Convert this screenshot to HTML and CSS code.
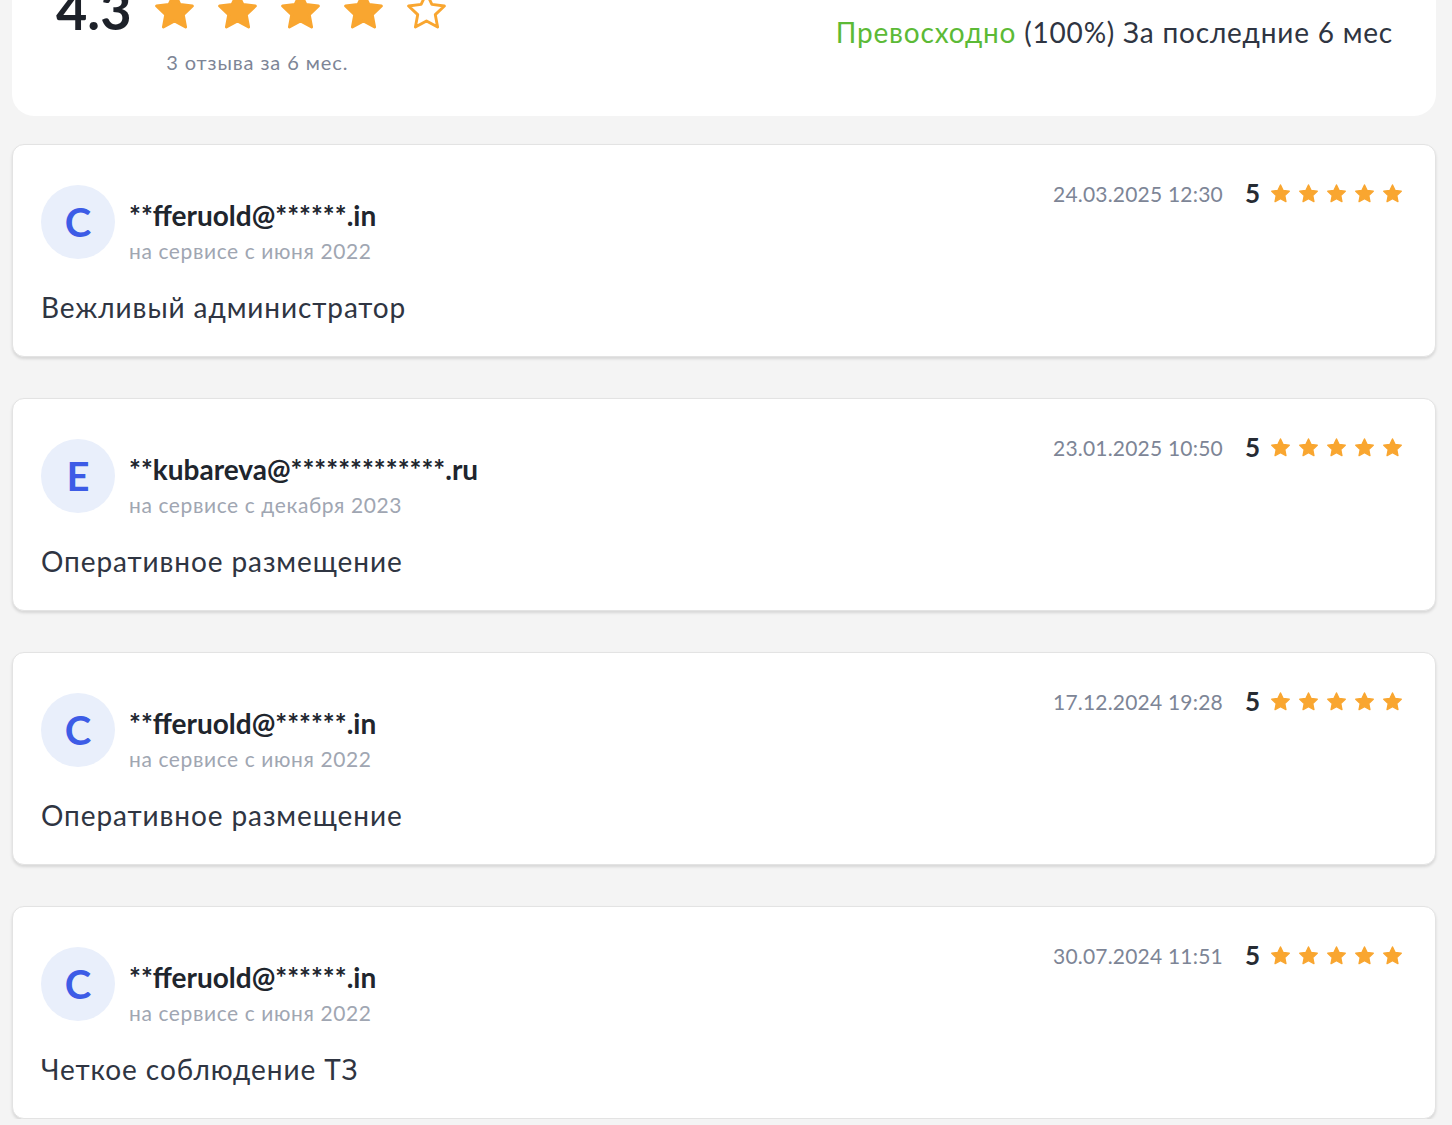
FILE: index.html
```html
<!DOCTYPE html>
<html lang="ru">
<head>
<meta charset="utf-8">
<title>Отзывы</title>
<link rel="stylesheet" href="styles.css">
</head>
<body>
<svg width="0" height="0" class="defs" aria-hidden="true">
  <defs>
    <symbol id="star" viewBox="0 0 24 24">
      <polygon points="12,2.2 15,8.6 22,9.5 16.9,14.3 18.2,21.2 12,17.8 5.8,21.2 7.1,14.3 2,9.5 9,8.6" stroke-linejoin="round" stroke-width="1.6"/>
    </symbol>
  </defs>
</svg>
<div class="page">
  <section class="summary">
    <div class="summary-left">
      <div class="score-row">
        <span class="score">4.3</span>
        <span class="big-stars">
          <svg class="bstar"><use href="#star"/></svg>
          <svg class="bstar"><use href="#star"/></svg>
          <svg class="bstar"><use href="#star"/></svg>
          <svg class="bstar"><use href="#star"/></svg>
          <svg class="bstar empty"><use href="#star"/></svg>
        </span>
      </div>
      <div class="count">3 отзыва за 6 мес.</div>
    </div>
    <div class="summary-right"><span class="good">Превосходно</span> (100%) За последние 6 мес</div>
  </section>

  <div class="reviews">
  <article class="review">
    <div class="review-head">
      <div class="author">
        <div class="avatar">C</div>
        <div class="author-info">
          <div class="name">**fferuold@******.in</div>
          <div class="since">на сервисе с июня 2022</div>
        </div>
      </div>
      <div class="meta">
        <span class="date">24.03.2025 12:30</span>
        <span class="rate">5</span>
        <span class="stars">
          <svg class="sstar"><use href="#star"/></svg><svg class="sstar"><use href="#star"/></svg><svg class="sstar"><use href="#star"/></svg><svg class="sstar"><use href="#star"/></svg><svg class="sstar"><use href="#star"/></svg>
        </span>
      </div>
    </div>
    <p class="text">Вежливый администратор</p>
  </article>

  <article class="review">
    <div class="review-head">
      <div class="author">
        <div class="avatar">E</div>
        <div class="author-info">
          <div class="name">**kubareva@*************.ru</div>
          <div class="since">на сервисе с декабря 2023</div>
        </div>
      </div>
      <div class="meta">
        <span class="date">23.01.2025 10:50</span>
        <span class="rate">5</span>
        <span class="stars">
          <svg class="sstar"><use href="#star"/></svg><svg class="sstar"><use href="#star"/></svg><svg class="sstar"><use href="#star"/></svg><svg class="sstar"><use href="#star"/></svg><svg class="sstar"><use href="#star"/></svg>
        </span>
      </div>
    </div>
    <p class="text">Оперативное размещение</p>
  </article>

  <article class="review">
    <div class="review-head">
      <div class="author">
        <div class="avatar">C</div>
        <div class="author-info">
          <div class="name">**fferuold@******.in</div>
          <div class="since">на сервисе с июня 2022</div>
        </div>
      </div>
      <div class="meta">
        <span class="date">17.12.2024 19:28</span>
        <span class="rate">5</span>
        <span class="stars">
          <svg class="sstar"><use href="#star"/></svg><svg class="sstar"><use href="#star"/></svg><svg class="sstar"><use href="#star"/></svg><svg class="sstar"><use href="#star"/></svg><svg class="sstar"><use href="#star"/></svg>
        </span>
      </div>
    </div>
    <p class="text">Оперативное размещение</p>
  </article>

  <article class="review">
    <div class="review-head">
      <div class="author">
        <div class="avatar">C</div>
        <div class="author-info">
          <div class="name">**fferuold@******.in</div>
          <div class="since">на сервисе с июня 2022</div>
        </div>
      </div>
      <div class="meta">
        <span class="date">30.07.2024 11:51</span>
        <span class="rate">5</span>
        <span class="stars">
          <svg class="sstar"><use href="#star"/></svg><svg class="sstar"><use href="#star"/></svg><svg class="sstar"><use href="#star"/></svg><svg class="sstar"><use href="#star"/></svg><svg class="sstar"><use href="#star"/></svg>
        </span>
      </div>
    </div>
    <p class="text">Четкое соблюдение ТЗ</p>
  </article>
  </div>
</div>
</body>
</html>
```

FILE: styles.css
```css
html, body {
  margin: 0;
  padding: 0;
  background: #f4f4f4;
  overflow: hidden;
}
body {
  font-family: Lato, "Open Sans", sans-serif;
  color: #2f3542;
}
.defs {
  position: absolute;
  width: 0;
  height: 0;
}
.page {
  margin: -37px 16px 0 12px;
  display: flex;
  flex-direction: column;
}
.summary {
  background: #fff;
  border-radius: 0 0 22px 22px;
  padding: 20px 43px 42px 44px;
  display: flex;
  justify-content: space-between;
  align-items: flex-start;
}
.summary-left {
  display: flex;
  flex-direction: column;
  align-items: center;
}
.score-row {
  display: flex;
  align-items: center;
  gap: 22px;
}
.score {
  font-size: 54px;
  font-weight: 700;
  color: #1d2129;
  line-height: 1;
}
.big-stars {
  display: flex;
  gap: 20px;
}
.bstar {
  width: 43px;
  height: 43px;
  fill: #f9a630;
  stroke: #f9a630;
}
.bstar.empty {
  fill: none;
  stroke-width: 1.3;
}
.count {
  margin-top: 13px;
  margin-left: 10px;
  font-size: 20px;
  color: #7d8596;
  letter-spacing: 0.9px;
}
.summary-right {
  margin-top: 32px;
  font-size: 28px;
  color: #2f3542;
  letter-spacing: 0.8px;
}
.good {
  color: #5cba36;
}
.reviews {
  margin-top: 28px;
  display: flex;
  flex-direction: column;
  gap: 41px;
}
.review {
  background: #fff;
  border: 1px solid #e3e3e3;
  border-radius: 12px;
  box-shadow: 0 2px 3px rgba(0, 0, 0, 0.12);
  padding: 40px 32px 31px 28px;
}
.review-head {
  display: flex;
  justify-content: space-between;
  align-items: flex-start;
}
.author {
  display: flex;
  align-items: flex-start;
  gap: 14px;
}
.avatar {
  width: 74px;
  height: 74px;
  border-radius: 50%;
  background: #e9effb;
  color: #3d5ce6;
  font-size: 40px;
  font-weight: 700;
  display: flex;
  align-items: center;
  justify-content: center;
}
.author-info {
  display: flex;
  flex-direction: column;
  padding-top: 12px;
}
.name {
  font-size: 28px;
  font-weight: 700;
  color: #20252d;
  line-height: 36px;
}
.since {
  font-size: 21px;
  color: #a0a6b2;
  line-height: 36px;
  letter-spacing: 0.6px;
}
.meta {
  display: flex;
  align-items: center;
  gap: 10px;
  margin-top: -8px;
}
.date {
  font-size: 21px;
  color: #7d8596;
  margin-right: 12px;
  letter-spacing: 0.2px;
}
.rate {
  font-size: 26px;
  font-weight: 700;
  color: #262b33;
}
.stars {
  display: flex;
  gap: 7px;
}
.sstar {
  width: 21px;
  height: 21px;
  fill: #f9a630;
  stroke: #f9a630;
}
.text {
  margin: 20px 0 0 0;
  font-size: 28px;
  line-height: 36px;
  color: #2f3542;
  letter-spacing: 0.9px;
}
```
